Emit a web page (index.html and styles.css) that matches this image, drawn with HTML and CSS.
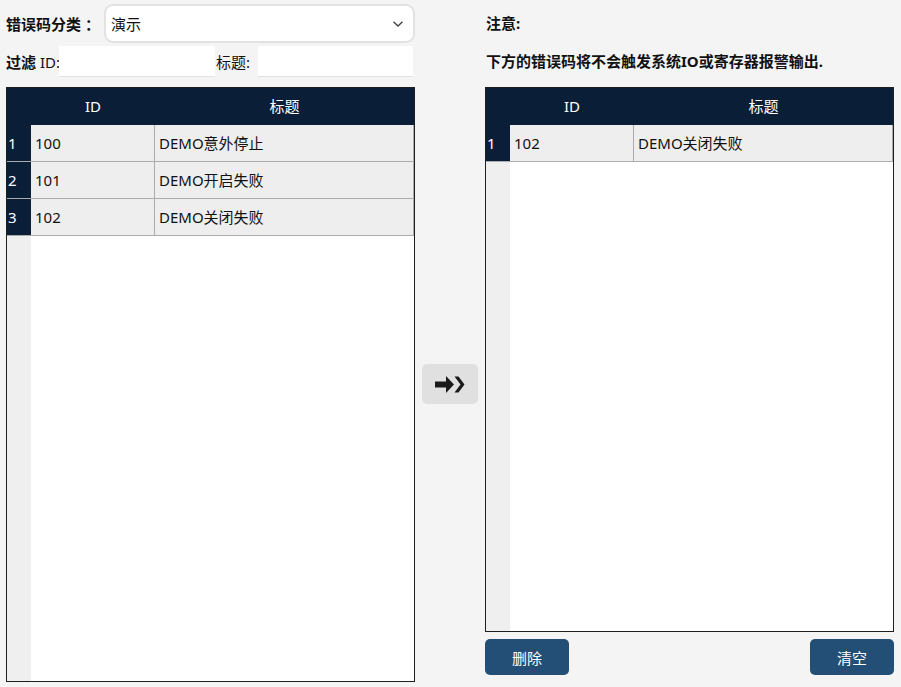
FILE: index.html
```html
<!DOCTYPE html>
<html lang="zh-CN">
<head>
<meta charset="utf-8">
<link rel="stylesheet" href="styles.css">
</head>
<body>
<div class="page">
  <div class="col left">
    <div class="cat-row">
      <span class="lbl-bold">错误码分类 ：</span>
      <div class="select">
        <span>演示</span>
        <svg class="chev" width="12" height="8" viewBox="0 0 12 8"><path d="M1.5 1.8 L6 6 L10.5 1.8" fill="none" stroke="#444" stroke-width="1.4"/></svg>
      </div>
    </div>
    <div class="filter-row">
      <span class="flabel"><span class="lbl-bold">过滤</span><span class="lbl">&nbsp;ID:</span></span>
      <div class="input w-id"></div>
      <span class="lbl">标题:</span>
      <div class="input w-title"></div>
    </div>
    <div class="table tall">
      <div class="thead">
        <div class="th idx"></div>
        <div class="th id">ID</div>
        <div class="th title">标题</div>
      </div>
      <div class="tbody">
        <div class="tr"><div class="td idx">1</div><div class="td id">100</div><div class="td title">DEMO意外停止</div></div>
        <div class="tr"><div class="td idx">2</div><div class="td id">101</div><div class="td title">DEMO开启失败</div></div>
        <div class="tr"><div class="td idx">3</div><div class="td id">102</div><div class="td title">DEMO关闭失败</div></div>
      </div>
    </div>
  </div>
  <div class="col mid">
    <button class="move-btn">
      <svg width="30" height="17" viewBox="0 0 30 17"><path d="M0 5.5 H11 V0 L19 8.5 L11 17 V11.5 H0 Z" fill="#1a1a1a"/><path d="M19.5 0.5 L23.5 0.5 L29.5 8.5 L23.5 16.5 L19.5 16.5 L25.5 8.5 Z" fill="#1a1a1a"/></svg>
    </button>
  </div>
  <div class="col right">
    <div class="note1">注意:</div>
    <div class="note2">下方的错误码将不会触发系统IO或寄存器报警输出.</div>
    <div class="table short">
      <div class="thead">
        <div class="th idx"></div>
        <div class="th id">ID</div>
        <div class="th title">标题</div>
      </div>
      <div class="tbody">
        <div class="tr"><div class="td idx">1</div><div class="td id">102</div><div class="td title">DEMO关闭失败</div></div>
      </div>
    </div>
    <div class="btn-row">
      <button class="btn">删除</button>
      <button class="btn">清空</button>
    </div>
  </div>
</div>
</body>
</html>
```

FILE: styles.css
```css
* { box-sizing: border-box; }
html, body { margin: 0; padding: 0; }
body {
  background: #f4f4f4;
  font-family: "Noto Sans", "Noto Sans CJK SC", sans-serif;
  font-size: 15px;
  color: #111;
  width: 901px;
  height: 687px;
  overflow: hidden;
}
.page {
  display: grid;
  grid-template-columns: 409px 70px 409px;
  padding-left: 6px;
  height: 687px;
}
.col { display: flex; flex-direction: column; }
.lbl-bold { font-weight: 700; white-space: nowrap; }
.lbl { white-space: nowrap; }

.cat-row {
  display: flex;
  align-items: center;
  height: 39px;
  margin-top: 4px;
}
.cat-row .lbl-bold { width: 98px; }
.select {
  flex: 1;
  height: 39px;
  background: #fff;
  border: 2px solid #e2e2e2;
  border-radius: 9px;
  display: flex;
  align-items: center;
  justify-content: space-between;
  padding: 0 9px 0 5px;
}
.filter-row {
  display: flex;
  align-items: center;
  height: 31px;
  margin-top: 3px;
}
.flabel { width: 53px; flex: none; white-space: nowrap; }
.input {
  height: 31px;
  background: #fff;
  border-bottom: 1px solid #e2e2e2;
}
.w-id { width: 156px; margin-right: 1px; }
.w-title { width: 155px; margin-left: 8px; }

.table {
  margin-top: 10px;
  border: 1px solid #1e1e1e;
  background: linear-gradient(to right, #efefef 0 24px, #fff 24px);
  display: flex;
  flex-direction: column;
}
.table.tall { height: 595px; }
.table.short { height: 545px; }
.thead {
  display: flex;
  height: 37px;
  background: #0b1e38;
  color: #fff;
  flex: none;
  padding-bottom: 2px;
}
.th { display: flex; align-items: center; justify-content: center; }
.idx { width: 24px; flex: none; }
.id { width: 124px; flex: none; }
.title { flex: 1; }
.tr {
  display: flex;
  height: 37px;
  background: #eeeeee;
  border-bottom: 1px solid #ababab;
}
.td { display: flex; align-items: center; padding-bottom: 1px; }
.td.idx { background: #0b1e38; color: #fff; padding-left: 1px; }
.td.id { padding-left: 4px; border-right: 1px solid #ababab; }
.td.title { padding-left: 4px; border-right: 1px solid #ababab; }

.mid { align-items: flex-start; justify-content: flex-start; }
.move-btn {
  margin-top: 364px;
  margin-left: 7px;
  width: 56px;
  height: 40px;
  border: none;
  border-radius: 5px;
  background: #e0e0e0;
  display: flex;
  align-items: center;
  justify-content: center;
  padding: 0;
}

.note1 { font-weight: 700; margin-top: 13px; height: 20px; line-height: 20px; padding-left: 1px; }
.note2 { font-weight: 700; margin-top: 18px; height: 20px; line-height: 20px; padding-left: 1px; }
.right .table { margin-top: 16px; }

.btn-row {
  display: flex;
  justify-content: space-between;
  margin-top: 7px;
}
.btn {
  width: 84px;
  height: 36px;
  border: none;
  border-radius: 5px;
  background: #234e75;
  color: #fff;
  font-family: "Noto Sans CJK SC", sans-serif;
  font-size: 15px;
  padding: 0;
}
```
